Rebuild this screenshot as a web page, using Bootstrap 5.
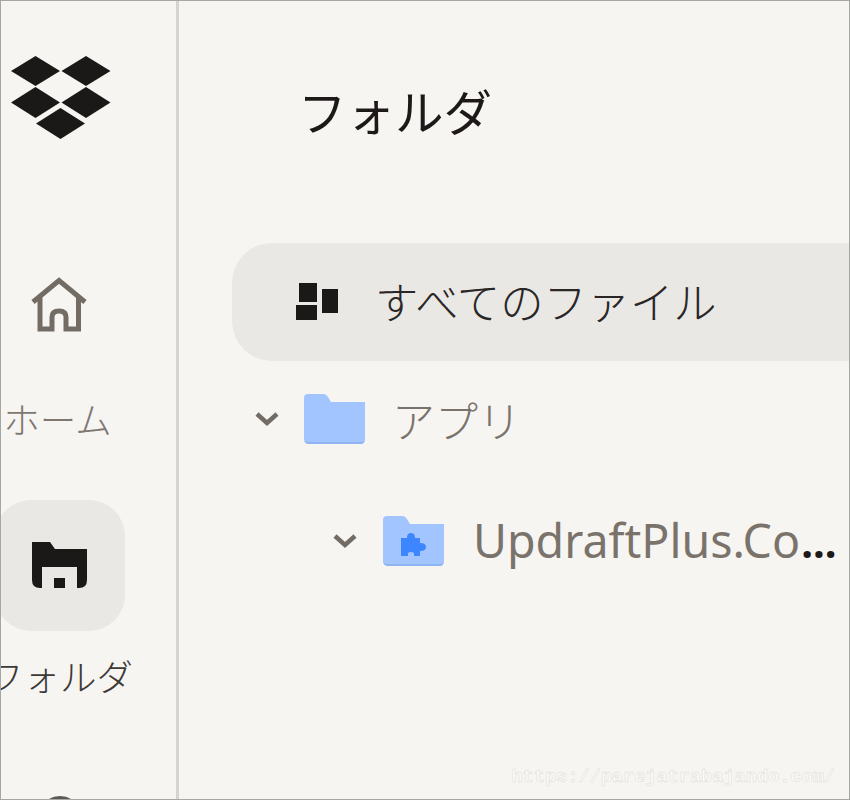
<!DOCTYPE html>
<html lang="ja">
<head>
<meta charset="utf-8">
<title>フォルダ</title>
<link href="https://cdn.jsdelivr.net/npm/bootstrap@5.3.0/dist/css/bootstrap.min.css" rel="stylesheet">
<style>
html,body{height:100%;margin:0}
body{background:#f7f5f2;font-family:"Noto Sans CJK JP","Noto Sans",sans-serif;color:#1e1919}
.frame{width:850px;height:800px;overflow:hidden;border:1px solid #a6a6a3;background:#f7f5f2}
.rail{width:178px;height:100%;flex:none;border-right:3px solid #d6d4d0;padding-top:55px}
.rail-col{width:118px}
.logo{display:block;width:100px;height:85px;margin-left:2px}
.home-ic{display:block;margin-top:136px;width:56px;height:56px;margin-left:-2px}
.rail-label{font-size:36.500px;line-height:50px;white-space:nowrap;color:#7f7871;font-weight:300}
.home-label{margin-top:61px;margin-right:5px}
.tile{width:130px;height:131px;border-radius:36px;background:#e9e8e5;flex:none;margin-top:56px}
.tile-label{color:#3d3936;margin-top:20px}
.more{margin-top:95px;flex:none}
.pane{min-width:0;padding-left:53px}
.pane-title{font-size:48.500px;line-height:60px;font-weight:400;margin:79px 0 0 66px;color:#1e1919;white-space:nowrap}
.tree{margin-top:103px}
.row-all{height:118px;margin-right:-40px;border-radius:40px;background:#e9e8e5;padding-left:64px;font-size:43.300px;font-weight:300;color:#2a2625;white-space:nowrap}
.row-all .ic{margin-right:37px}
.row-all-text{margin-bottom:3px}
.row-node{font-size:43px;white-space:nowrap;color:#736c64}
.lv1{padding-left:22px;height:116px;color:#7a736c;font-weight:300}
.lv2{padding-left:100px;height:128px}
.chev{margin-right:24px;flex:none}
.fold{margin-right:26px;flex:none}
.lv2 .chev{margin-right:25px}
.lv2 .fold{margin-right:28px}
.node-latin{font-family:"Noto Sans",sans-serif;font-size:46.500px;font-weight:400;color:#7a736c}
.dots{color:#1e1919;font-weight:700;margin-left:1px;font-size:42px}
.mark-url{position:absolute;right:14px;bottom:10px;font-family:"Liberation Mono",monospace;font-weight:700;font-size:18.600px;line-height:22px;color:#fbfaf8;-webkit-text-stroke:.5px #dddbd7}
</style>
</head>
<body>
<div class="frame d-flex position-relative">
  <aside class="rail">
    <div class="rail-col d-flex flex-column align-items-center">
      <svg class="logo" viewBox="0 0 100 85" aria-hidden="true"><g fill="#1a1918"><path d="M24.500 0 49 15 24.500 30 0 15z"/><path d="M75 0 99.500 15 75 30 50.500 15z"/><path d="M24.500 31 49 46.500 24.500 62 0 46.500z"/><path d="M75 31 99.500 46.500 75 62 50.500 46.500z"/><path d="M49.500 52 74 67.500 49.500 83 25 67.500z"/></g></svg>
      <svg class="home-ic" viewBox="0 0 56 56" aria-hidden="true"><path d="M2 25 28 3.500 54 25M9 20V52H21V40Q21 34 28 34T35 40V52H47.500V20" fill="none" stroke="#736c64" stroke-width="5"/></svg>
      <div class="rail-label home-label">ホーム</div>
      <div class="tile d-flex align-items-center justify-content-center">
        <svg width="56" height="48" viewBox="0 0 56 48" aria-hidden="true"><path fill="#1a1918" d="M0 0H18L23 7H55V38Q55 46 47 46H45V25H10V46H8Q0 46 0 38z"/><path fill="#1a1918" d="M22 36H33V46H22z"/></svg>
      </div>
      <div class="rail-label tile-label">フォルダ</div>
      <svg class="more" width="44" height="44" viewBox="0 0 44 44" aria-hidden="true"><circle cx="22" cy="22" r="20" fill="none" stroke="#5c5853" stroke-width="4"/></svg>
    </div>
  </aside>
  <main class="pane flex-grow-1">
    <h1 class="pane-title">フォルダ</h1>
    <div class="tree">
      <div class="row-all d-flex align-items-center">
        <svg class="ic" width="42" height="38" viewBox="0 0 42 38" aria-hidden="true"><g fill="#1a1918"><rect x="3" width="18" height="19"/><rect y="22" width="21" height="15"/><rect x="26" y="6" width="16" height="24"/></g></svg>
        <span class="row-all-text">すべてのファイル</span>
      </div>
      <div class="row-node lv1 d-flex align-items-center">
        <svg class="chev" width="26" height="16" viewBox="0 0 26 16" aria-hidden="true"><path d="M3 3 13 12 23 3" fill="none" stroke="#736c64" stroke-width="4.500"/></svg>
        <svg class="fold" width="62" height="51" viewBox="0 0 62 51" aria-hidden="true"><path fill="#a3c5ff" d="M0 4Q0 0 4 0H20Q22 0 24 3L27 8H61V45Q61 50 56 50H6Q0 50 0 45z"/><path fill="#8fb4f2" d="M0 46Q1 48 6 48H56Q60 48 61 46V45Q61 50 56 50H6Q0 50 0 45z"/></svg>
        <span>アプリ</span>
      </div>
      <div class="row-node lv2 d-flex align-items-center">
        <svg class="chev" width="26" height="16" viewBox="0 0 26 16" aria-hidden="true"><path d="M3 3 13 12 23 3" fill="none" stroke="#736c64" stroke-width="4.500"/></svg>
        <svg class="fold" width="62" height="51" viewBox="0 0 62 51" aria-hidden="true"><path fill="#a3c5ff" d="M0 4Q0 0 4 0H20Q22 0 24 3L27 8H61V45Q61 50 56 50H6Q0 50 0 45z"/><path fill="#8fb4f2" d="M0 46Q1 48 6 48H56Q60 48 61 46V45Q61 50 56 50H6Q0 50 0 45z"/><path fill="#3d86ff" d="M18 22H24Q24 17 28 17T32 22H37V27Q43 27 43 31T37 35V40H31V37Q28 35 25 37V40H18z"/></svg>
        <span class="node-latin">UpdraftPlus.Co<span class="dots">...</span></span>
      </div>
    </div>
  </main>
  <div class="mark-url">https://parejatrabajando.com/</div>
</div>
</body>
</html>
